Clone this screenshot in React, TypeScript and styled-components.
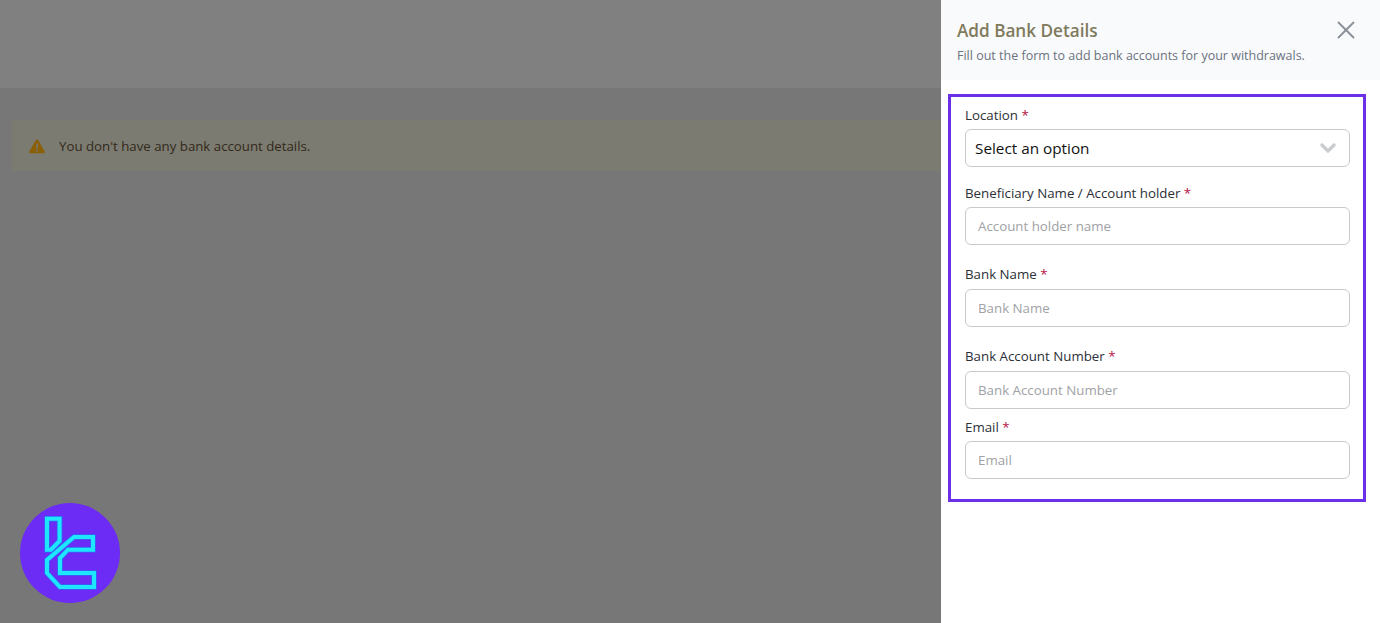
import React from "react";
import styled, { createGlobalStyle } from "styled-components";
import { X, ChevronDown } from "lucide-react";

const GlobalStyle = createGlobalStyle`
  html, body {
    margin: 0;
    padding: 0;
    height: 100%;
    overflow: hidden;
  }
  body {
    font-family: "Open Sans", "Noto Sans", "Liberation Sans", sans-serif;
  }
`;

const Page = styled.div`
  display: flex;
  position: relative;
  width: 100%;
  height: 623px;
  overflow: hidden;
`;

const Backdrop = styled.main`
  flex: 1;
  min-width: 0;
  display: flex;
  flex-direction: column;
  background-color: #777777;
`;

const TopBar = styled.div`
  height: 88px;
  background-color: #808080;
`;

const Alert = styled.div`
  display: flex;
  align-items: center;
  gap: 14px;
  height: 51px;
  margin: 32px 0 0 12px;
  padding: 1px 0 0 17px;
  box-sizing: border-box;
  background-color: #7b7b71;
  color: #33291a;
  font-size: 13.25px;
`;

const Panel = styled.aside`
  width: 439px;
  flex-shrink: 0;
  background-color: #ffffff;
`;

const PanelHeader = styled.header`
  display: flex;
  justify-content: space-between;
  height: 80px;
  padding: 19px 19px 0 16px;
  box-sizing: border-box;
  background-color: #f9fafb;
`;

const Title = styled.h2`
  margin: 0;
  font-size: 17.15px;
  line-height: 24px;
  font-weight: 600;
  color: #7f7a5c;
`;

const Subtitle = styled.p`
  margin: 4px 0 0;
  font-size: 12.5px;
  line-height: 18px;
  color: #6b7280;
`;

const CloseButton = styled.button`
  display: flex;
  width: 30px;
  height: 30px;
  margin-top: -4px;
  padding: 0;
  border: none;
  background: none;
  color: #8b9099;
`;

const FormBox = styled.form`
  width: 418px;
  height: 408px;
  margin: 14px 0 0 7px;
  padding: 8px 13px 0 14px;
  box-sizing: border-box;
  border: 3px solid #6a2fe6;
`;

const Field = styled.div<{ $top: number; $gap: number }>`
  display: flex;
  flex-direction: column;
  gap: ${(p) => p.$gap}px;
  margin-top: ${(p) => p.$top}px;
`;

const Label = styled.label`
  font-size: 13.3px;
  line-height: 20px;
  color: #2b2f36;
`;

const Required = styled.span`
  color: #b3123f;
`;

const SelectBox = styled.div`
  display: flex;
  align-items: center;
  justify-content: space-between;
  height: 38px;
  padding: 0 9px;
  box-sizing: border-box;
  border: 1px solid #c9c9c9;
  border-radius: 6px;
  color: #111111;
  font-size: 15.3px;
`;

const TextInput = styled.input`
  display: block;
  width: 100%;
  height: 38px;
  padding: 0 12px;
  box-sizing: border-box;
  border: 1px solid #c9c9c9;
  border-radius: 6px;
  background: #ffffff;
  font-family: inherit;
  font-size: 13.3px;
  outline: none;

  &::placeholder {
    color: #a0a2a6;
    opacity: 1;
  }
`;

const LogoBadge = styled.div`
  position: absolute;
  left: 20px;
  top: 503px;
  width: 100px;
  height: 100px;
`;

const fields = [
  { label: "Beneficiary Name / Account holder", placeholder: "Account holder name", top: 16, gap: 4 },
  { label: "Bank Name", placeholder: "Bank Name", top: 19, gap: 5 },
  { label: "Bank Account Number", placeholder: "Bank Account Number", top: 19, gap: 5 },
  { label: "Email", placeholder: "Email", top: 8, gap: 4 },
];

const WarningIcon = () => (
  <svg width="16" height="15" viewBox="0 0 16 15" aria-hidden="true">
    <path
      d="M8 .6c.5 0 .9.3 1.2.7l6.4 11c.5.9-.1 2-1.2 2H1.6c-1.1 0-1.7-1.1-1.2-2l6.4-11C7.100.9 7.500.6 8 .6z"
      fill="#8a5f08"
    />
    <rect x="7.100" y="4.500" width="1.800" height="5" rx=".6" fill="#77766a" />
    <circle cx="8" cy="11.700" r="1.050" fill="#77766a" />
  </svg>
);

const logoL = "M27 15.700H39.600V38L31 46.700H27Z";
const logoT = "M73 34V46.700H48L40 55V70H74V84H40L27 70V57L54 34Z";

const Logo = () => (
  <svg width="100" height="100" viewBox="0 0 100 100" aria-hidden="true">
    <circle cx="50" cy="50" r="50" fill="#6d2cf5" />
    <g fill="none" stroke="#2a6cf5" strokeWidth="5.500">
      <path d={logoL} />
      <path d={logoT} />
    </g>
    <g fill="none" stroke="#1fe6ff" strokeWidth="4">
      <path d={logoL} />
      <path d={logoT} />
    </g>
  </svg>
);

export default function App() {
  return (
    <Page>
      <GlobalStyle />
      <Backdrop>
        <TopBar />
        <Alert>
          <WarningIcon />
          <span>You don't have any bank account details.</span>
        </Alert>
      </Backdrop>
      <Panel>
        <PanelHeader>
          <div>
            <Title>Add Bank Details</Title>
            <Subtitle>Fill out the form to add bank accounts for your withdrawals.</Subtitle>
          </div>
          <CloseButton type="button" aria-label="Close">
            <X size={30} strokeWidth={1.5} />
          </CloseButton>
        </PanelHeader>
        <FormBox>
          <Field $top={0} $gap={4}>
            <Label>
              Location <Required>*</Required>
            </Label>
            <SelectBox>
              Select an option
              <ChevronDown size={24} strokeWidth={3.5} color="#cccdd0" />
            </SelectBox>
          </Field>
          {fields.map((f) => (
            <Field key={f.label} $top={f.top} $gap={f.gap}>
              <Label>
                {f.label} <Required>*</Required>
              </Label>
              <TextInput placeholder={f.placeholder} />
            </Field>
          ))}
        </FormBox>
      </Panel>
      <LogoBadge>
        <Logo />
      </LogoBadge>
    </Page>
  );
}
